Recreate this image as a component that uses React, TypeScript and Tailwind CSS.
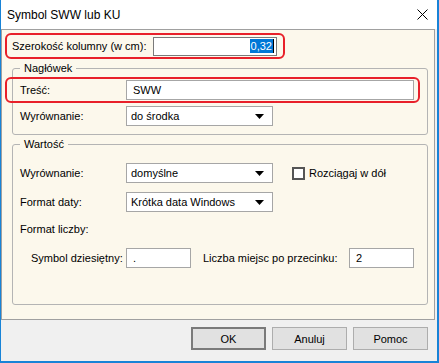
import React from 'react';

const font = { fontFamily: '"Liberation Sans", Arial, sans-serif' };

const Arrow = () => (
  <svg width="9" height="5" viewBox="0 0 9 5" className="shrink-0">
    <path d="M0 0 H9 L4.5 5 Z" fill="#000" />
  </svg>
);

const Select = ({ value, width }: { value: string; width: string }) => (
  <div className={`${width} h-[20px] bg-white border border-[#a6a6a6] flex items-center justify-between pl-[4px] pr-[8px]`}>
    <span>{value}</span>
    <Arrow />
  </div>
);

const Field = ({ value, className }: { value: string; className: string }) => (
  <div className={`${className} h-[20px] bg-white border border-[#a6a6a6] flex items-center px-[6px]`}>
    {value}
  </div>
);

export default function App() {
  return (
    <div
      style={font}
      className="w-[439px] h-[363px] flex flex-col bg-[#f0f0f0] border-l border-r-2 border-b-2 border-[#1883d7] text-[11px] text-black leading-[16px]"
    >
      {/* Title bar */}
      <div className="h-[29px] shrink-0 bg-white flex items-center justify-between pl-[6px] pr-[9px]">
        <span className="text-[12px]">Symbol SWW lub KU</span>
        <svg width="11" height="11" viewBox="0 0 11 11">
          <path d="M0.5 0.5 L10.5 10.5 M10.5 0.5 L0.5 10.5" stroke="#000" strokeWidth="1" />
        </svg>
      </div>

      {/* Main panel */}
      <div className="h-[291px] shrink-0 mr-[2px] bg-[#fcf8ec] border border-[#a0a0a0] flex flex-col">
        <div className="mt-[3px] ml-[3px] w-[280px] h-[26px] border-2 border-[#e8202a] rounded-[6px] flex items-center pl-[5px]">
          <span className="w-[141px]">Szerokość kolumny (w cm):</span>
          <div className="w-[124px] h-[19px] bg-white border border-[#7a7a7a] flex items-center justify-end pr-[2px]">
            <span className="bg-[#0078d7] text-white leading-[14px] px-[1px]">0,32</span>
            <span className="w-px h-[14px] bg-black" />
          </div>
        </div>

        {/* Nagłówek */}
        <fieldset className="mt-[1px] ml-[10px] w-[416px] border border-[#b4b4b4] rounded-[3px] pl-[7px] pb-[8px]">
          <legend className="px-[4px]">Nagłówek</legend>
          <div className="mt-[1px] ml-[-15px] w-[415px] h-[26px] border-2 border-[#e8202a] rounded-[6px] flex items-center pl-[13px]">
            <span className="w-[106px]">Treść:</span>
            <Field value="SWW" className="w-[288px]" />
          </div>
          <div className="mt-[3px] h-[20px] flex items-center">
            <span className="w-[106px]">Wyrównanie:</span>
            <Select value="do środka" width="w-[147px]" />
          </div>
        </fieldset>

        {/* Wartość */}
        <fieldset className="mt-[1px] ml-[10px] w-[416px] border border-[#b4b4b4] rounded-[3px] pl-[7px] pb-[36px]">
          <legend className="px-[4px]">Wartość</legend>
          <div className="mt-[11px] h-[20px] flex items-center">
            <span className="w-[106px]">Wyrównanie:</span>
            <Select value="domyślne" width="w-[147px]" />
            <div className="ml-[19px] w-[13px] h-[13px] border-2 border-[#555] bg-white" />
            <span className="ml-[4px]">Rozciągaj w dół</span>
          </div>
          <div className="mt-[9px] h-[20px] flex items-center">
            <span className="w-[106px]">Format daty:</span>
            <Select value="Krótka data Windows" width="w-[147px]" />
          </div>
          <div className="mt-[9px] h-[16px] flex items-center">Format liczby:</div>
          <div className="mt-[11px] h-[20px] flex items-center pl-[11px]">
            <span className="w-[95px]">Symbol dziesiętny:</span>
            <Field value="." className="w-[65px]" />
            <span className="ml-[12px] w-[146px]">Liczba miejsc po przecinku:</span>
            <Field value="2" className="w-[65px]" />
          </div>
        </fieldset>
      </div>

      {/* Footer buttons */}
      <div className="flex-1 flex justify-end items-start gap-[6px] pt-[7px] pr-[9px]">
        <button className="w-[75px] h-[23px] bg-[#e1e1e1] border-2 border-[#7a7a7a] flex items-center justify-center">OK</button>
        <button className="w-[75px] h-[23px] bg-[#e1e1e1] border border-[#adadad] flex items-center justify-center">Anuluj</button>
        <button className="w-[75px] h-[23px] bg-[#e1e1e1] border border-[#adadad] flex items-center justify-center">Pomoc</button>
      </div>
    </div>
  );
}
